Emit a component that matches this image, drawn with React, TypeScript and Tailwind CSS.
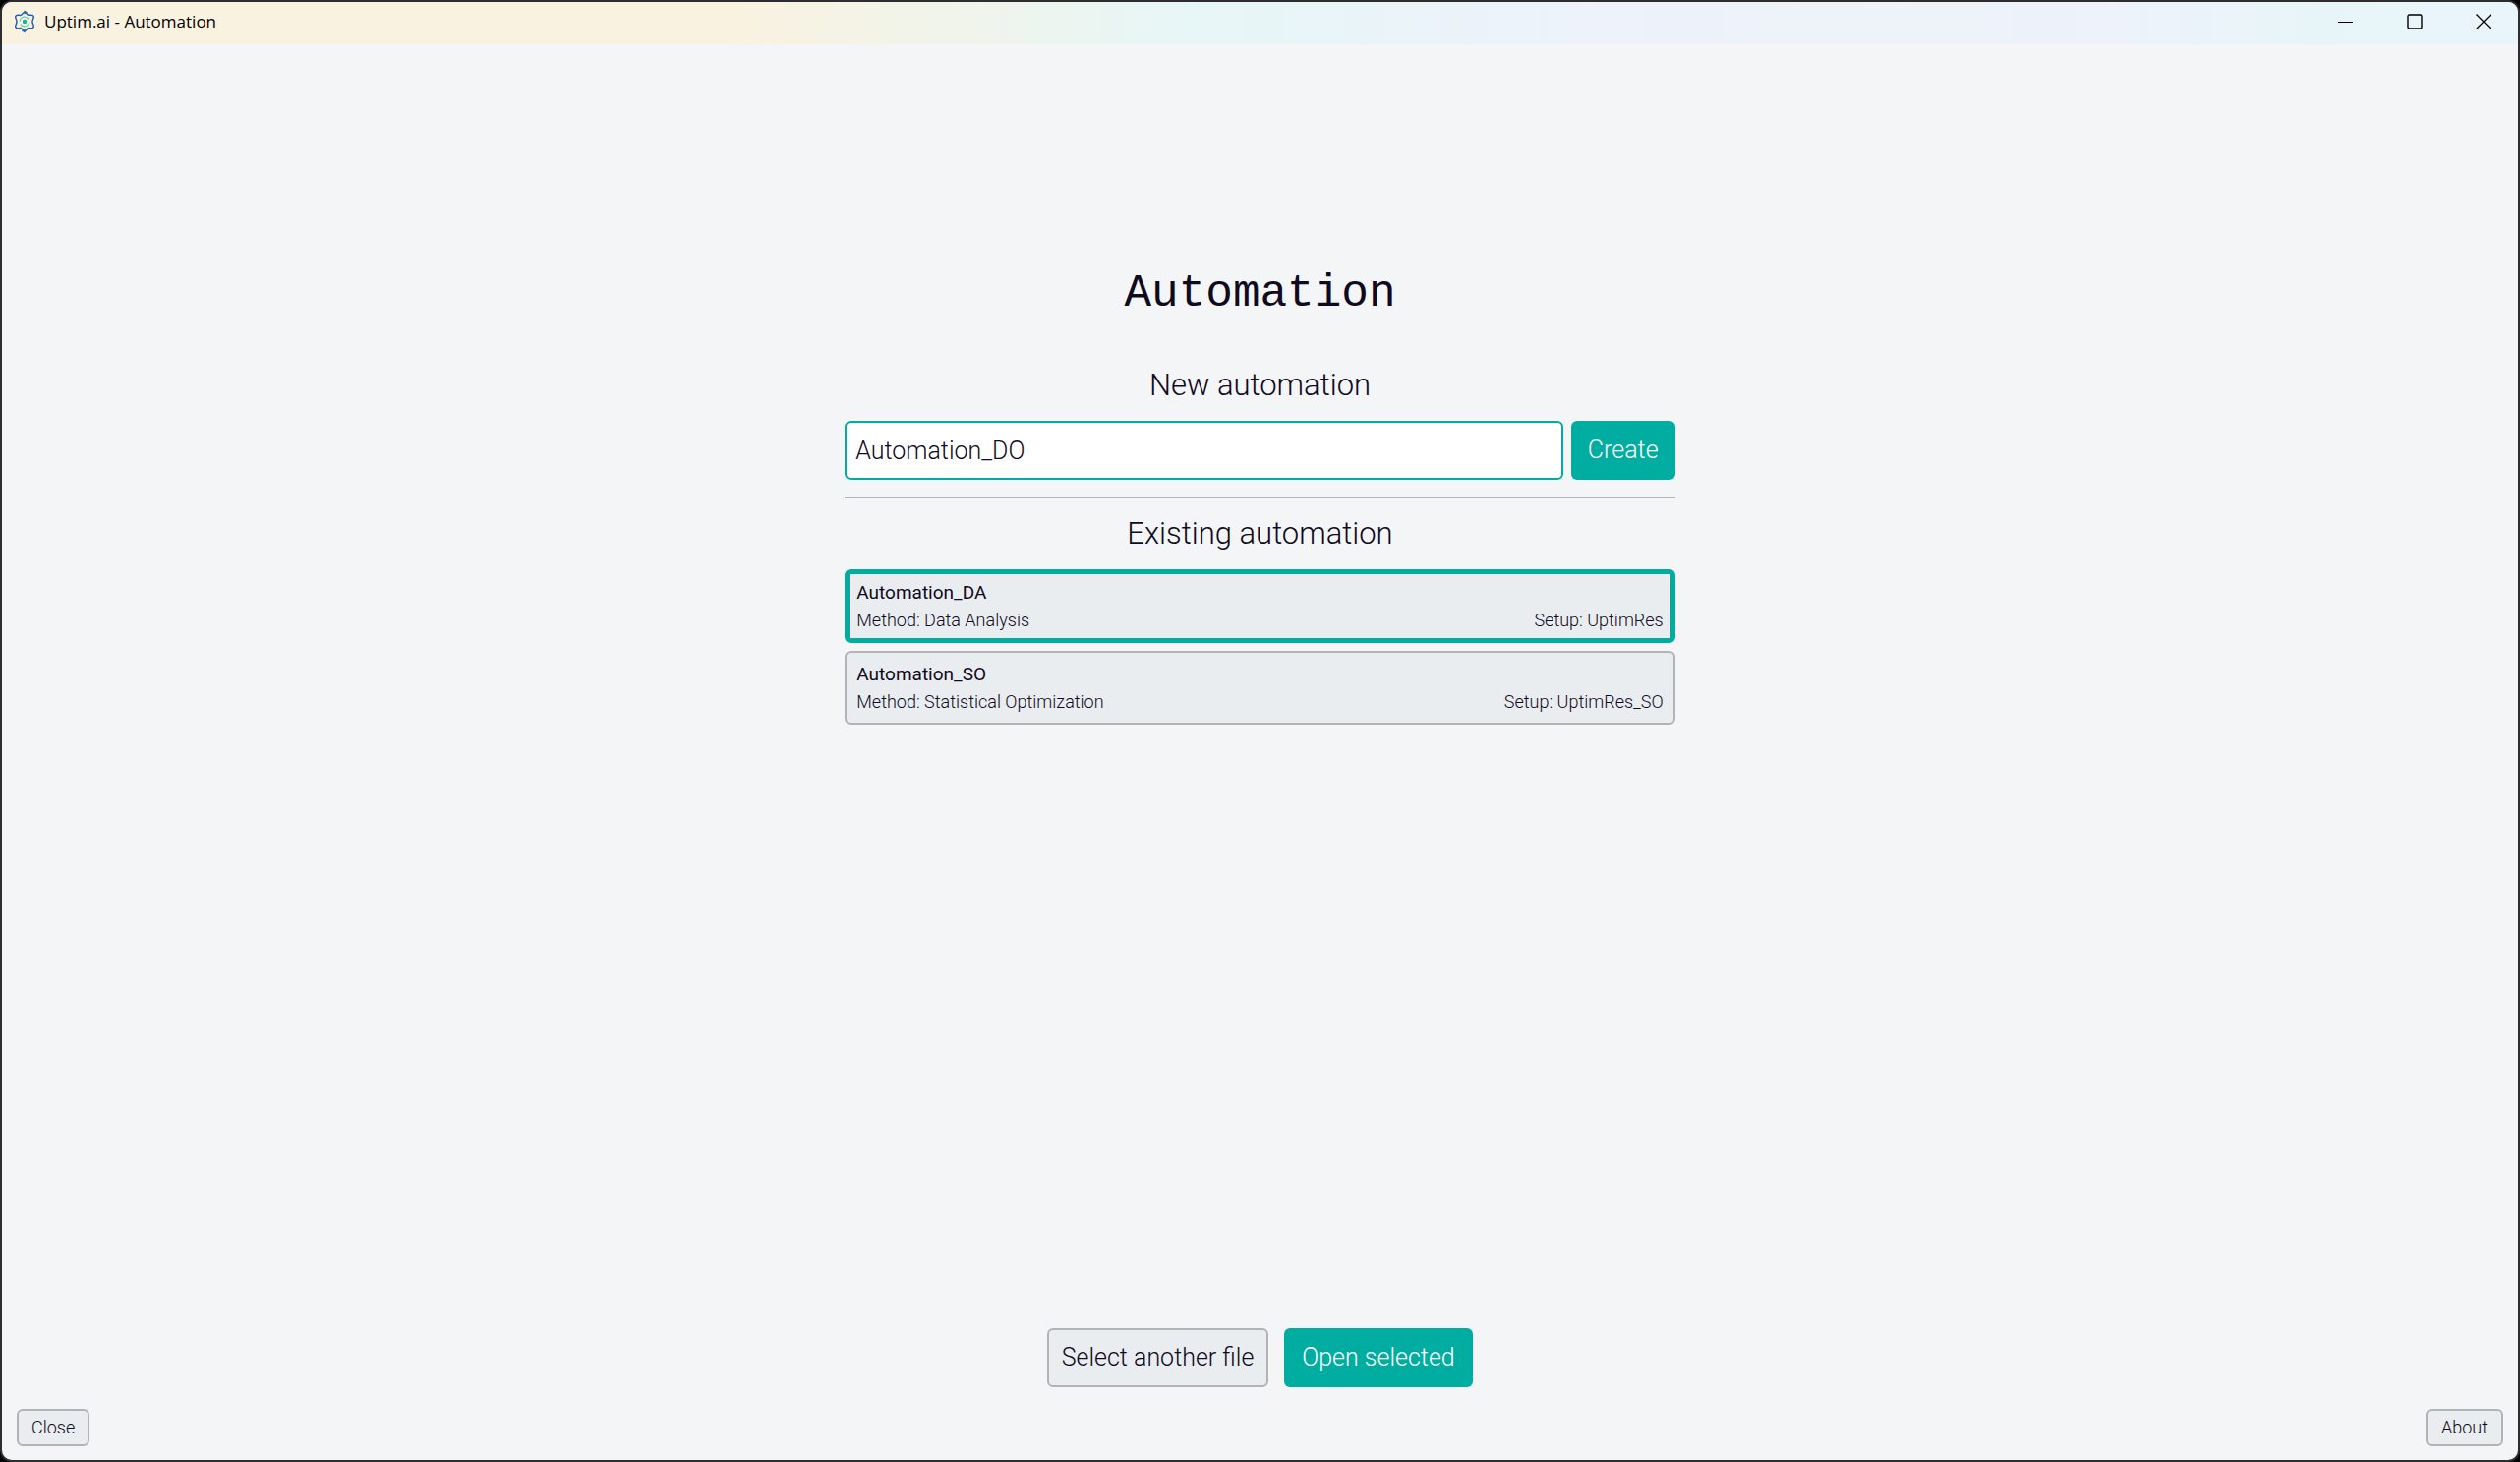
import React, { useState } from "react";

type Automation = {
  name: string;
  method: string;
  setup: string;
};

const automations: Automation[] = [
  { name: "Automation_DA", method: "Data Analysis", setup: "UptimRes" },
  { name: "Automation_SO", method: "Statistical Optimization", setup: "UptimRes_SO" },
];

function Logo() {
  return (
    <svg className="size-6" viewBox="0 0 24 24" fill="none" aria-hidden="true">
      <path
        d="M12 2.2C13.8 2.2 14 5.2 16.2 5.4C18.6 5.4 20.6 4.6 21.2 6.4C21.8 8.4 20 9.6 20 12C20 14.4 21.8 15.6 21.2 17.6C20.6 19.4 18.6 18.6 16.2 18.6C14 18.8 13.8 21.8 12 21.8C10.2 21.8 10 18.8 7.8 18.6C5.4 18.6 3.4 19.4 2.8 17.6C2.2 15.6 4 14.4 4 12C4 9.6 2.2 8.4 2.8 6.4C3.4 4.6 5.4 5.4 7.8 5.4C10 5.2 10.2 2.2 12 2.2Z"
        stroke="#2463a8"
        strokeWidth="1.5"
      />
      <path d="M11.5 .4 15 2.4 11.5 4.4ZM12.5 19.6 9 21.6 12.5 23.6Z" fill="#2463a8" />
      <circle cx="12" cy="12" r="4.8" stroke="#5fd0b5" strokeWidth="1.3" strokeDasharray="12 3" />
      <circle cx="12" cy="12" r="2.2" fill="#14b39a" />
    </svg>
  );
}

function TitleBar() {
  return (
    <header className="flex h-[43px] shrink-0 items-center justify-between bg-[linear-gradient(90deg,#f9f2e0_0%,#f9f2e0_29%,#e7f6f6_47%,#edf2fb_63%,#edf3f8_75%,#edf2fb_84%,#e8f5f8_92%,#e9f5fb_100%)] pr-[27px] pb-1 pl-[11px]">
      <div className="flex items-center gap-2">
        <Logo />
        <span className="font-['Open_Sans',sans-serif] text-[17px] leading-6 font-normal text-black">
          Uptim.ai - Automation
        </span>
      </div>
      <div className="flex items-center gap-[54px] text-black">
        <button type="button" aria-label="Minimize">
          <svg className="block size-4" viewBox="0 0 16 16" stroke="currentColor">
            <path d="M0 8.5H15" />
          </svg>
        </button>
        <button type="button" aria-label="Maximize">
          <svg className="block size-4" viewBox="0 0 16 16" fill="none" stroke="currentColor" strokeWidth="1.4">
            <rect x="1" y="1" width="14" height="14" rx="1.5" />
          </svg>
        </button>
        <button type="button" aria-label="Close window">
          <svg className="block size-4" viewBox="0 0 16 16" stroke="currentColor" strokeWidth="1.3">
            <path d="M.5 .5 15.5 15.5M15.5 .5 .5 15.5" />
          </svg>
        </button>
      </div>
    </header>
  );
}

export default function App() {
  const [name, setName] = useState("Automation_DO");
  const [selected, setSelected] = useState("Automation_DA");

  return (
    <div className="h-screen bg-black font-[Roboto,sans-serif] font-light text-[#100a1e]">
      <div className="flex h-full flex-col overflow-hidden rounded-xl border-2 border-[#2d2d30] bg-[#f3f5f7]">
        <TitleBar />

        <main className="mx-auto flex w-[33%] flex-1 flex-col pt-[224px]">
          <h1 className="text-center font-['Liberation_Mono',monospace] text-[46px] leading-[60px] font-normal">
            Automation
          </h1>

          <label htmlFor="new-name" className="mt-[43px] text-center text-[31px] leading-10">
            New automation
          </label>
          <div className="mt-4 flex gap-2">
            <input
              id="new-name"
              type="text"
              value={name}
              onChange={(e) => setName(e.target.value)}
              className="h-[60px] min-w-0 flex-1 rounded-md border-2 border-[#00ada0] bg-white px-[9px] text-[25px] outline-none"
            />
            <button type="button" className="h-[60px] w-[106px] rounded-md bg-[#00ada0] text-[25px] text-white">
              Create
            </button>
          </div>

          <hr className="mt-[17px] border-t-2 border-[#b1b3b6]" />

          <h2 className="mt-4 text-center text-[31px] leading-10">Existing automation</h2>
          <div className="mt-4 flex flex-col gap-2">
            {automations.map((a) => (
              <button
                key={a.name}
                type="button"
                aria-pressed={a.name === selected}
                onClick={() => setSelected(a.name)}
                className={`flex h-[75px] flex-col justify-center rounded-md bg-[#e9edf0] text-left text-lg leading-7 ${
                  a.name === selected ? "border-5 border-[#00ada0] px-[7px]" : "border-2 border-[#b1b3b6] px-[10px]"
                }`}
              >
                <span className="text-[19px] leading-7 font-normal">{a.name}</span>
                <span className="flex w-full justify-between">
                  <span>Method: {a.method}</span>
                  <span>Setup: {a.setup}</span>
                </span>
              </button>
            ))}
          </div>
        </main>

        <div className="flex justify-center gap-4 text-[25px]">
          <button type="button" className="h-[60px] w-[225px] rounded-md border-2 border-[#b1b3b6] bg-[#e9edf0]">
            Select another file
          </button>
          <button type="button" className="h-[60px] w-[192px] rounded-md bg-[#00ada0] text-white">
            Open selected
          </button>
        </div>

        <footer className="mt-[22px] mb-[14px] flex justify-between px-[15px] text-lg">
          <button type="button" className="h-[38px] rounded-md border-2 border-[#b1b3b6] bg-[#e9edf0] px-[13px]">
            Close
          </button>
          <button type="button" className="h-[38px] rounded-md border-2 border-[#b1b3b6] bg-[#e9edf0] px-[14px]">
            About
          </button>
        </footer>
      </div>
    </div>
  );
}
